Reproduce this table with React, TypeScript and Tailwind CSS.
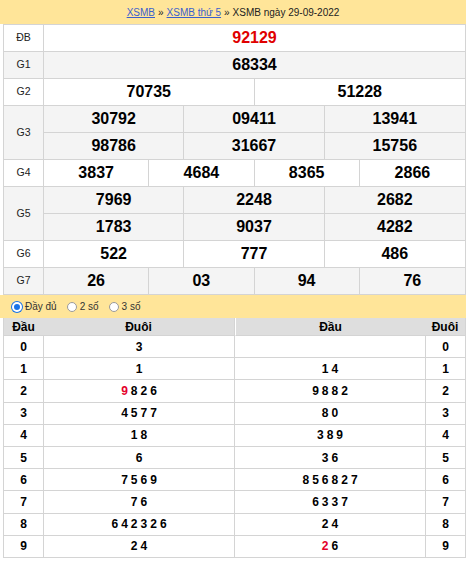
import React from "react";

type Prize = { label: string; rows: string[][]; red?: boolean };

const prizes: Prize[] = [
  { label: "ĐB", rows: [["92129"]], red: true },
  { label: "G1", rows: [["68334"]] },
  { label: "G2", rows: [["70735", "51228"]] },
  { label: "G3", rows: [["30792", "09411", "13941"], ["98786", "31667", "15756"]] },
  { label: "G4", rows: [["3837", "4684", "8365", "2866"]] },
  { label: "G5", rows: [["7969", "2248", "2682"], ["1783", "9037", "4282"]] },
  { label: "G6", rows: [["522", "777", "486"]] },
  { label: "G7", rows: [["26", "03", "94", "76"]] },
];

// loto: [digit, list, red index]
const dau: [string, string, number][] = [
  ["0", "3", -1],
  ["1", "1", -1],
  ["2", "9826", 0],
  ["3", "4577", -1],
  ["4", "18", -1],
  ["5", "6", -1],
  ["6", "7569", -1],
  ["7", "76", -1],
  ["8", "642326", -1],
  ["9", "24", -1],
];

const duoi: [string, string, number][] = [
  ["0", "", -1],
  ["1", "14", -1],
  ["2", "9882", -1],
  ["3", "80", -1],
  ["4", "389", -1],
  ["5", "36", -1],
  ["6", "856827", -1],
  ["7", "6337", -1],
  ["8", "24", -1],
  ["9", "26", 0],
];

const gridCols: Record<number, string> = {
  1: "grid-cols-1",
  2: "grid-cols-2",
  3: "grid-cols-3",
  4: "grid-cols-4",
};

function Digits({ s, red }: { s: string; red: number }) {
  return (
    <span className="flex gap-[3px]">
      {s.split("").map((d, i) => (
        <span key={i} className={i === red ? "text-[#e4002b]" : ""}>
          {d}
        </span>
      ))}
    </span>
  );
}

function Radio({ checked }: { checked?: boolean }) {
  return checked ? (
    <span className="w-[10px] h-[10px] rounded-full bg-[#1a73e8] border-[2px] border-white ring-1 ring-[#1a73e8] box-border" />
  ) : (
    <span className="w-[10px] h-[10px] rounded-full bg-white border border-[#9a9a9a] box-border" />
  );
}

export default function App() {
  return (
    <div className="w-[470px] h-[563px] bg-white font-['Liberation_Sans',Arial,sans-serif] text-black">
      {/* breadcrumb */}
      <div className="w-[466px] h-[24px] bg-[#ffe599] flex justify-center items-end pb-[4px] text-[10px] text-[#222]">
        <a className="text-[#3a5fcd] underline">XSMB</a>
        <span className="mx-[3px]">»</span>
        <a className="text-[#3a5fcd] underline">XSMB thứ 5</a>
        <span className="mx-[3px]">»</span>
        <span>XSMB ngày 29-09-2022</span>
      </div>

      {/* prize table */}
      <div className="ml-[3px] w-[463px] border-x border-t border-[#d4d4d4]">
        {prizes.map((p, pi) => {
          const bg = pi % 2 === 0 ? "bg-white" : "bg-[#f4f4f4]";
          return (
            <div key={p.label} className={`flex ${bg}`}>
              <div className="w-[40px] shrink-0 border-r border-b border-[#d4d4d4] flex items-center justify-center text-[10.5px] text-[#222]">
                {p.label}
              </div>
              <div className="flex-1 flex flex-col">
                {p.rows.map((r, ri) => (
                  <div
                    key={ri}
                    className={`grid ${gridCols[r.length]} h-[27px] border-b border-[#d4d4d4] divide-x divide-[#d4d4d4]`}
                  >
                    {r.map((n, ni) => (
                      <div
                        key={ni}
                        className={`flex items-center justify-center text-[16px] font-bold ${
                          p.red ? "text-[#e00000]" : ""
                        }`}
                      >
                        {n}
                      </div>
                    ))}
                  </div>
                ))}
              </div>
            </div>
          );
        })}
      </div>

      {/* options */}
      <div className="w-[466px] h-[23px] bg-[#ffe599] flex items-center pl-[12px] text-[10px] text-[#333]">
        <label className="flex items-center gap-[3px]">
          <Radio checked />
          Đầy đủ
        </label>
        <label className="flex items-center gap-[3px] ml-[10px]">
          <Radio />2 số
        </label>
        <label className="flex items-center gap-[3px] ml-[10px]">
          <Radio />3 số
        </label>
      </div>

      {/* loto */}
      <div className="ml-[3px] w-[463px] flex">
        <div className="w-[232px] border-x border-[#d4d4d4]">
          <div className="flex h-[18px] bg-[#dedede] border-b border-[#d4d4d4] text-[12px] font-bold">
            <div className="w-[39px] flex items-center justify-center">Đầu</div>
            <div className="flex-1 flex items-center justify-center">Đuôi</div>
          </div>
          {dau.map(([d, s, red]) => (
            <div key={d} className="flex h-[22.2px] border-b border-[#d4d4d4] text-[12px] font-bold">
              <div className="w-[40px] border-r border-[#d4d4d4] flex items-center justify-center">{d}</div>
              <div className="flex-1 flex items-center justify-center">
                <Digits s={s} red={red} />
              </div>
            </div>
          ))}
        </div>
        <div className="w-[231px] border-r border-[#d4d4d4]">
          <div className="flex h-[18px] bg-[#dedede] border-b border-l border-l-white border-b-[#d4d4d4] text-[12px] font-bold">
            <div className="flex-1 flex items-center justify-center">Đầu</div>
            <div className="w-[40px] flex items-center justify-center">Đuôi</div>
          </div>
          {duoi.map(([d, s, red]) => (
            <div key={d} className="flex h-[22.2px] border-b border-[#d4d4d4] text-[12px] font-bold">
              <div className="flex-1 flex items-center justify-center">
                <Digits s={s} red={red} />
              </div>
              <div className="w-[40px] border-l border-[#d4d4d4] flex items-center justify-center">{d}</div>
            </div>
          ))}
        </div>
      </div>
    </div>
  );
}
